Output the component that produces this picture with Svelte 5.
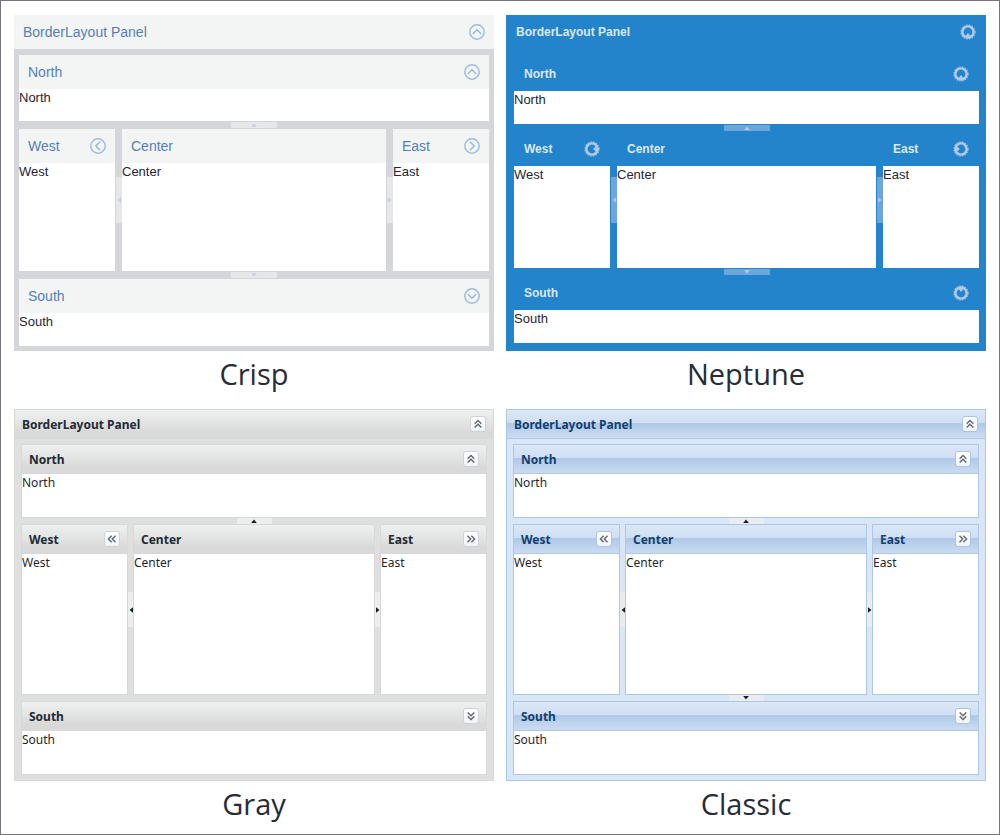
<script>
  const themes = [
    { id: 'crisp', name: 'Crisp', tool: 'ring', tabs: ['up', 'left', 'right', 'down'] },
    { id: 'neptune', name: 'Neptune', tool: 'disc', tabs: ['up', 'left', 'right', 'down'] },
    { id: 'gray', name: 'Gray', tool: 'double', tabs: ['up', 'left', 'right'] },
    { id: 'classic', name: 'Classic', tool: 'double', tabs: ['up', 'left', 'right', 'down'] }
  ];
  const turns = { up: 0, right: 90, down: 180, left: 270 };
  const places = { up: 'North', left: 'West', right: 'East', down: 'South' };
</script>

{#snippet tool(kind, dir, label)}
  <button class="tool {kind}" type="button" aria-label="Collapse {label}">
    <svg viewBox="0 0 16 16" aria-hidden="true">
      {#if kind === 'ring'}
        <circle cx="8" cy="8" r="7.2" fill="none" stroke="#9dbce2" stroke-width="1.5" />
        <path d="M3.8 10 8 5.8 12.2 10" transform="rotate({turns[dir]} 8 8)" fill="none" stroke="#96b8e2" stroke-width="1.5" />
      {:else if kind === 'disc'}
        <circle cx="8" cy="8" r="5.6" fill="none" stroke="#b3c9e8" stroke-width="2.4" />
        <circle cx="8" cy="8" r="7" fill="none" stroke="#b3c9e8" stroke-width="1.2" stroke-dasharray="1.6 1.2" />
        <path d="M4.8 13 8 9 11.2 13Z" transform="rotate({turns[dir]} 8 8)" fill="#b3c9e8" />
      {:else}
        <path d="M4.2 7.6 8 3.9 11.8 7.6M4.2 12 8 8.3 11.8 12" transform="rotate({turns[dir]} 8 8)" fill="none" stroke="#5d6876" stroke-width="1.6" />
      {/if}
    </svg>
  </button>
{/snippet}

{#snippet splitter(theme, dir)}
  <div class="splitter {dir}">
    {#if theme.tabs.includes(dir)}
      <button class="tab" type="button" aria-label="Toggle {places[dir]}">
        <svg viewBox="0 0 8 8" aria-hidden="true">
          <path d="M1.2 6 4 2.6 6.8 6Z" transform="rotate({turns[dir]} 4 4)" />
        </svg>
      </button>
    {/if}
  </div>
{/snippet}

{#snippet region(theme, name, dir)}
  <section class="region {name.toLowerCase()}">
    <header>
      <h3>{name}</h3>
      {#if dir}{@render tool(theme.tool, dir, name)}{/if}
    </header>
    <div class="body">{name}</div>
  </section>
{/snippet}

<main>
  {#each themes as theme (theme.id)}
    <figure class={theme.id}>
      <div class="panel">
        <header>
          <h2>BorderLayout Panel</h2>
          {@render tool(theme.tool, 'up', 'panel')}
        </header>
        <div class="layout">
          {@render region(theme, 'North', 'up')}
          {@render splitter(theme, 'up')}
          <div class="middle">
            {@render region(theme, 'West', 'left')}
            {@render splitter(theme, 'left')}
            {@render region(theme, 'Center', null)}
            {@render splitter(theme, 'right')}
            {@render region(theme, 'East', 'right')}
          </div>
          {@render splitter(theme, 'down')}
          {@render region(theme, 'South', 'down')}
        </div>
      </div>
      <figcaption>{theme.name}</figcaption>
    </figure>
  {/each}
</main>

<style>
  :global(body) {
    margin: 0;
    background: #fff;
  }

  main,
  main * {
    box-sizing: border-box;
  }

  main {
    display: grid;
    grid-template-columns: repeat(2, minmax(0, 1fr));
    align-content: start;
    gap: 12px;
    min-height: 100vh;
    padding: 14px 13px 6px;
    border: 1px solid #74767d;
  }

  figure {
    --side: 96px;
    --split: 8px;
    --split-x: 7px;
    --head: 34px;
    margin: 0;
    color: #1f2631;
    font-family: 'Liberation Sans', Arial, sans-serif;
    font-size: 13px;
    line-height: 18px;
  }

  figcaption {
    color: #262d38;
    font-family: 'Open Sans', sans-serif;
    font-size: 29px;
    line-height: 46px;
    text-align: center;
  }

  h2,
  h3 {
    margin: 0;
    font: inherit;
  }

  header {
    display: flex;
    align-items: center;
    justify-content: space-between;
    height: var(--head);
    padding: 0 var(--inset);
    white-space: nowrap;
  }

  .layout {
    display: flex;
    flex-direction: column;
    padding: var(--frame);
  }

  .middle {
    display: grid;
    grid-template-columns: var(--side) var(--split-x) minmax(0, 1fr) var(--split-x) var(--side);
  }

  .body {
    height: var(--north-body);
    background: #fff;
  }

  .middle .body {
    height: var(--middle-body);
  }

  .south .body {
    height: var(--south-body);
  }

  button {
    display: flex;
    align-items: center;
    justify-content: center;
    padding: 0;
    border: 0;
    background: none;
  }

  svg {
    display: block;
    flex: none;
  }

  .tool,
  .tool svg {
    width: 16px;
    height: 16px;
  }

  .splitter {
    display: flex;
    align-items: center;
    justify-content: center;
    height: var(--split);
  }

  .splitter.left,
  .splitter.right {
    height: auto;
  }

  .tab {
    width: var(--tab);
    height: 6px;
    background: var(--tab-fill);
  }

  .left .tab,
  .right .tab {
    width: 6px;
    height: var(--tab);
  }

  .tab svg {
    width: 8px;
    height: 8px;
    fill: var(--arrow);
  }

  /* Crisp */
  .crisp {
    --inset: 9px;
    --frame: 6px 5px 5px;
    --north-body: 32px;
    --middle-body: 108px;
    --south-body: 33px;
    --tab: 46px;
    --tab-fill: #e5e7e8;
    --arrow: #c9d3df;
  }

  .crisp .panel {
    background: #d4d6d9;
  }

  .crisp header {
    background: #f3f5f5;
    color: #5580b6;
    font-size: 14px;
  }

  /* Neptune */
  .neptune {
    --inset: 10px;
    --frame: 8px 7px 8px 8px;
    --north-body: 33px;
    --middle-body: 102px;
    --south-body: 33px;
    --tab: 46px;
    --tab-fill: #6da6da;
    --arrow: #b3c9e8;
  }

  .neptune .panel {
    background: #2383cb;
  }

  .neptune header {
    color: #dce8f5;
    font-size: 12px;
    font-weight: 700;
  }

  /* Gray and Classic */
  .gray,
  .classic {
    --side: 107px;
    --split: 6px;
    --split-x: 5px;
    --head: 29px;
    --inset: 7px;
    --frame: 5px 6px;
    --north-body: 43px;
    --middle-body: 140px;
    --south-body: 43px;
    --tab: 35px;
    --arrow: #161c25;
    font-family: 'Noto Sans', Tahoma, sans-serif;
    font-size: 12px;
    line-height: 17px;
  }

  .gray .panel,
  .classic .panel,
  .gray .region,
  .classic .region {
    border: 1px solid var(--line);
  }

  .gray .panel,
  .classic .panel {
    background: var(--backdrop);
  }

  .gray header,
  .classic header {
    border-bottom: 1px solid var(--line);
    background: var(--head-fill);
    color: var(--title);
    font-weight: 700;
  }

  .tool.double {
    border: 1px solid var(--tool-line);
    border-radius: 3px;
    background: linear-gradient(#fff, #f1f3f5);
  }

  .tool.double svg {
    width: 14px;
    height: 14px;
  }

  .gray {
    --line: #d8d8d8;
    --backdrop: #dedfdf;
    --head-fill: linear-gradient(#eff1f1, #d9d9d9 80%);
    --title: #222a35;
    --tool-line: #cdd3db;
    --tab-fill: #eceeee;
  }

  .classic {
    --line: #adc7e7;
    --backdrop: #d9e6f5;
    --head-fill: linear-gradient(#dbe7f5, #cfdff4 45%, #aec8e8 46%, #cbdcf2);
    --title: #123f70;
    --tool-line: #a9c4e6;
    --tab-fill: #e9edf0;
  }
</style>
